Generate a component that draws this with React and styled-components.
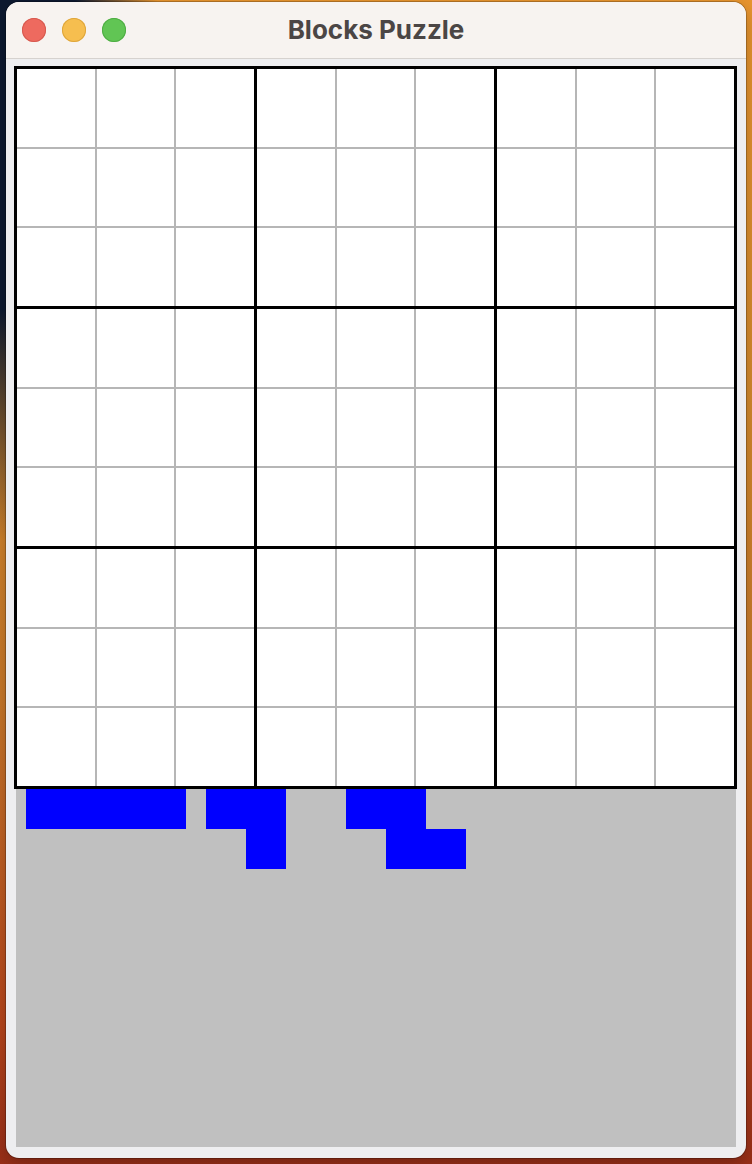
import React from "react";
import styled, { createGlobalStyle } from "styled-components";

const Global = createGlobalStyle`
  html, body { margin: 0; padding: 0; }
  body { width: 752px; height: 1164px; overflow: hidden; font-family: Inter, "Noto Sans", sans-serif; }
`;

const Desktop = styled.div`
  width: 752px;
  height: 1164px;
  box-sizing: border-box;
  padding: 2px 6px 6px 6px;
  background:
    radial-gradient(ellipse 160px 460px at 0 80px, #0d1930 50%, rgba(13,25,48,0) 100%),
    linear-gradient(180deg, #e8952f 0%, #d58a2c 35%, #c9782a 60%, #b8461c 88%, #9a2f18 100%);
  display: flex;
`;

const Window = styled.div`
  flex: 1;
  display: flex;
  flex-direction: column;
  border-radius: 13px;
  overflow: hidden;
  background: #eeeef0;
  box-shadow: 0 0 0 1px rgba(0, 0, 0, 0.22), 0 6px 18px rgba(0, 0, 0, 0.25);
`;

const TitleBar = styled.div`
  height: 56px;
  flex: none;
  display: flex;
  align-items: center;
  position: relative;
  background: #f7f3f0;
  border-bottom: 1px solid #d6d2cf;
  padding-left: 16px;
  gap: 16px;
`;

const Light = styled.span`
  width: 24px;
  height: 24px;
  border-radius: 50%;
  background: ${(p) => p.$color};
  box-shadow: inset 0 0 0 1px ${(p) => p.$edge};
  flex: none;
`;

const Title = styled.div`
  position: absolute;
  left: 0;
  right: 0;
  top: 0;
  bottom: 2px;
  display: flex;
  align-items: center;
  justify-content: center;
  font-family: Inter, "Noto Sans", sans-serif;
  font-weight: 700;
  font-size: 26px;
  color: #4b4645;
  pointer-events: none;
`;

const Content = styled.div`
  flex: 1;
  display: flex;
  flex-direction: column;
  padding: 7px 10px 11px 8px;
`;

const Board = styled.div`
  width: 723px;
  height: 723px;
  box-sizing: border-box;
  flex: none;
  display: grid;
  grid-template-columns: repeat(3, 1fr);
  grid-template-rows: repeat(3, 1fr);
  gap: 3px;
  padding: 3px;
  background: #000;
`;

const Block = styled.div`
  display: grid;
  grid-template-columns: repeat(3, 1fr);
  grid-template-rows: repeat(3, 1fr);
  gap: 2px;
  background: #b6b6b6;
`;

const Cell = styled.div`
  background: #fff;
`;

const Tray = styled.div`
  flex: 1;
  margin-left: 2px;
  width: 720px;
  background: #c0c0c0;
  display: flex;
  align-items: flex-start;
  padding-left: 10px;
  box-sizing: border-box;
`;

const Piece = styled.div`
  display: grid;
  grid-template-columns: repeat(${(p) => p.$cols}, 40px);
  grid-auto-rows: 40px;
  margin-left: ${(p) => p.$offset}px;
`;

const Square = styled.div`
  background: ${(p) => (p.$on ? "#0000ff" : "transparent")};
`;

const pieces = [
  { offset: 0, shape: [[1, 1, 1, 1]] },
  { offset: 20, shape: [[1, 1], [0, 1]] },
  { offset: 60, shape: [[1, 1, 0], [0, 1, 1]] },
];

export default function App() {
  return (
    <>
      <Global />
      <Desktop>
        <Window>
          <TitleBar>
            <Light $color="#ee6a5f" $edge="#d65a50" />
            <Light $color="#f6be4f" $edge="#dea63c" />
            <Light $color="#61c554" $edge="#4fad44" />
            <Title>Blocks Puzzle</Title>
          </TitleBar>
          <Content>
            <Board>
              {Array.from({ length: 9 }).map((_, b) => (
                <Block key={b}>
                  {Array.from({ length: 9 }).map((__, c) => (
                    <Cell key={c} />
                  ))}
                </Block>
              ))}
            </Board>
            <Tray>
              {pieces.map((p, i) => (
                <Piece key={i} $cols={p.shape[0].length} $offset={p.offset}>
                  {p.shape.flat().map((v, j) => (
                    <Square key={j} $on={!!v} />
                  ))}
                </Piece>
              ))}
            </Tray>
          </Content>
        </Window>
      </Desktop>
    </>
  );
}
